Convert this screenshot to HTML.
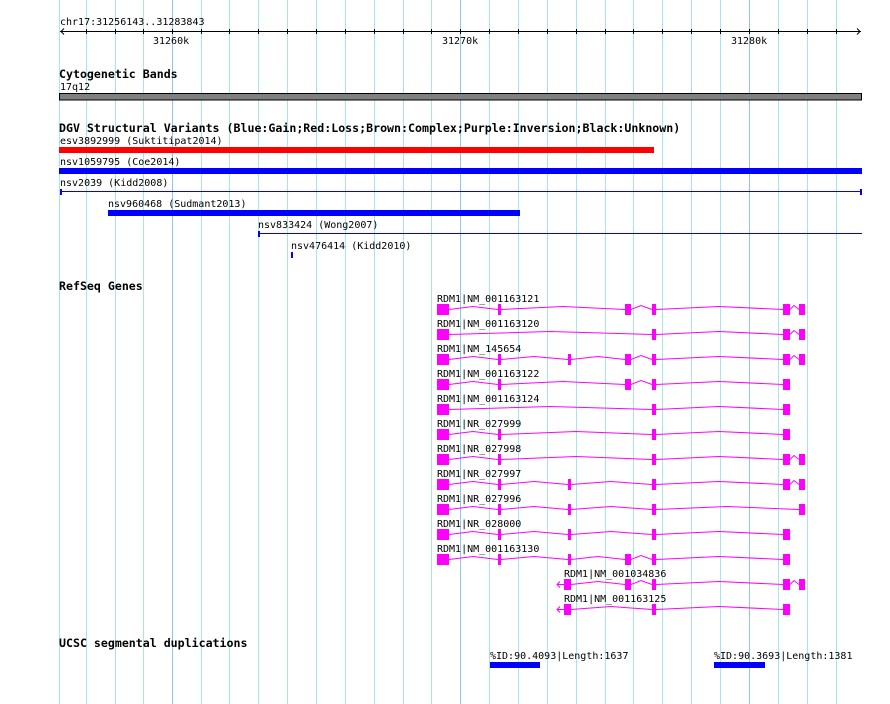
<!DOCTYPE html>
<html><head><meta charset="utf-8"><style>
html,body{margin:0;padding:0;background:#fff;width:890px;height:704px;overflow:hidden}
svg{display:block}
text{font-family:"DejaVu Sans Mono","Liberation Mono",monospace;font-size:10px;fill:#000}
.b{font-weight:bold;font-size:11.6px}
.g{stroke:#a8e6ee;stroke-width:1}
.m{stroke:#8ec6e6;stroke-width:1}
.ex{fill:#ff00ff}
.in{fill:none;stroke:#ff00ff;stroke-width:1}
</style></head><body>
<svg width="890" height="704" xmlns="http://www.w3.org/2000/svg">
<g>
<line class="g" x1="59.5" y1="0" x2="59.5" y2="704"/>
<line class="g" x1="86.5" y1="0" x2="86.5" y2="704"/>
<line class="g" x1="115.5" y1="0" x2="115.5" y2="704"/>
<line class="g" x1="143.5" y1="0" x2="143.5" y2="704"/>
<line class="m" x1="172.5" y1="0" x2="172.5" y2="704"/>
<line class="g" x1="201.5" y1="0" x2="201.5" y2="704"/>
<line class="g" x1="229.5" y1="0" x2="229.5" y2="704"/>
<line class="g" x1="258.5" y1="0" x2="258.5" y2="704"/>
<line class="g" x1="287.5" y1="0" x2="287.5" y2="704"/>
<line class="g" x1="316.5" y1="0" x2="316.5" y2="704"/>
<line class="g" x1="345.5" y1="0" x2="345.5" y2="704"/>
<line class="g" x1="374.5" y1="0" x2="374.5" y2="704"/>
<line class="g" x1="403.5" y1="0" x2="403.5" y2="704"/>
<line class="g" x1="431.5" y1="0" x2="431.5" y2="704"/>
<line class="m" x1="460.5" y1="0" x2="460.5" y2="704"/>
<line class="g" x1="489.5" y1="0" x2="489.5" y2="704"/>
<line class="g" x1="518.5" y1="0" x2="518.5" y2="704"/>
<line class="g" x1="547.5" y1="0" x2="547.5" y2="704"/>
<line class="g" x1="576.5" y1="0" x2="576.5" y2="704"/>
<line class="g" x1="605.5" y1="0" x2="605.5" y2="704"/>
<line class="g" x1="633.5" y1="0" x2="633.5" y2="704"/>
<line class="g" x1="662.5" y1="0" x2="662.5" y2="704"/>
<line class="g" x1="691.5" y1="0" x2="691.5" y2="704"/>
<line class="g" x1="720.5" y1="0" x2="720.5" y2="704"/>
<line class="m" x1="749.5" y1="0" x2="749.5" y2="704"/>
<line class="g" x1="778.5" y1="0" x2="778.5" y2="704"/>
<line class="g" x1="807.5" y1="0" x2="807.5" y2="704"/>
<line class="g" x1="836.5" y1="0" x2="836.5" y2="704"/>
</g>

<text x="60" y="25">chr17:31256143..31283843</text>
<line x1="60" y1="31.5" x2="861" y2="31.5" stroke="#000"/>
<polyline points="64,28.5 61,31.5 64,34.5" fill="none" stroke="#000"/>
<polyline points="857,28.5 860,31.5 857,34.5" fill="none" stroke="#000"/>
<g stroke="#000">
<line x1="86.5" y1="29" x2="86.5" y2="34"/><line x1="115.5" y1="29" x2="115.5" y2="34"/><line x1="143.5" y1="29" x2="143.5" y2="34"/><line x1="172.5" y1="29" x2="172.5" y2="34"/><line x1="201.5" y1="29" x2="201.5" y2="34"/><line x1="229.5" y1="29" x2="229.5" y2="34"/><line x1="258.5" y1="29" x2="258.5" y2="34"/><line x1="287.5" y1="29" x2="287.5" y2="34"/><line x1="316.5" y1="29" x2="316.5" y2="34"/><line x1="345.5" y1="29" x2="345.5" y2="34"/><line x1="374.5" y1="29" x2="374.5" y2="34"/><line x1="403.5" y1="29" x2="403.5" y2="34"/><line x1="431.5" y1="29" x2="431.5" y2="34"/><line x1="460.5" y1="29" x2="460.5" y2="34"/><line x1="489.5" y1="29" x2="489.5" y2="34"/><line x1="518.5" y1="29" x2="518.5" y2="34"/><line x1="547.5" y1="29" x2="547.5" y2="34"/><line x1="576.5" y1="29" x2="576.5" y2="34"/><line x1="605.5" y1="29" x2="605.5" y2="34"/><line x1="633.5" y1="29" x2="633.5" y2="34"/><line x1="662.5" y1="29" x2="662.5" y2="34"/><line x1="691.5" y1="29" x2="691.5" y2="34"/><line x1="720.5" y1="29" x2="720.5" y2="34"/><line x1="749.5" y1="29" x2="749.5" y2="34"/><line x1="778.5" y1="29" x2="778.5" y2="34"/><line x1="807.5" y1="29" x2="807.5" y2="34"/><line x1="836.5" y1="29" x2="836.5" y2="34"/>
</g>
<text x="153" y="44">31260k</text>
<text x="442" y="44">31270k</text>
<text x="731" y="44">31280k</text>

<text class="b" x="59" y="78">Cytogenetic Bands</text>
<text x="60" y="90">17q12</text>
<rect x="59.5" y="93.5" width="802" height="6.5" fill="#808080" stroke="#000"/>

<text class="b" x="59" y="132">DGV Structural Variants (Blue:Gain;Red:Loss;Brown:Complex;Purple:Inversion;Black:Unknown)</text>
<text x="60" y="144">esv3892999 (Suktitipat2014)</text>
<rect x="59" y="147" width="595" height="6" fill="#ff0000"/>
<text x="60" y="165">nsv1059795 (Coe2014)</text>
<rect x="59" y="168" width="803" height="6" fill="#0000ff"/>
<text x="60" y="186">nsv2039 (Kidd2008)</text>
<line x1="60" y1="191.5" x2="862" y2="191.5" stroke="#0000ff"/>
<rect x="60" y="189" width="2" height="6" fill="#0000ff"/>
<rect x="860" y="189" width="2" height="6" fill="#0000ff"/>
<text x="108" y="207">nsv960468 (Sudmant2013)</text>
<rect x="108" y="210" width="412" height="6" fill="#0000ff"/>
<text x="258" y="228">nsv833424 (Wong2007)</text>
<line x1="258" y1="233.5" x2="862" y2="233.5" stroke="#0000ff"/>
<rect x="258" y="231" width="2" height="6" fill="#0000ff"/>
<text x="291" y="249">nsv476414 (Kidd2010)</text>
<rect x="291" y="252" width="2" height="6" fill="#0000ff"/>

<text class="b" x="59" y="290">RefSeq Genes</text>

<text x="437" y="302">RDM1|NM_001163121</text>
<g transform="translate(0,309)">
<polyline class="in" points="449,0.5 473,-2.5 498,0.5"/><polyline class="in" points="501,0.5 563,-2.5 625,0.5"/><polyline class="in" points="631,0.5 641,-3.5 652,0.5"/><polyline class="in" points="656,0.5 719,-2.5 783,0.5"/><polyline class="in" points="790,0.5 794,-3.5 799,0.5"/>
<rect class="ex" x="437" y="-5" width="12" height="11"/><rect class="ex" x="498" y="-5" width="3" height="11"/><rect class="ex" x="625" y="-5" width="6" height="11"/><rect class="ex" x="652" y="-5" width="4" height="11"/><rect class="ex" x="783" y="-5" width="7" height="11"/><rect class="ex" x="799" y="-5" width="6" height="11"/>
</g>

<text x="437" y="327">RDM1|NM_001163120</text>
<g transform="translate(0,334)">
<polyline class="in" points="449,0.5 550,-2.5 652,0.5"/><polyline class="in" points="656,0.5 719,-2.5 783,0.5"/><polyline class="in" points="790,0.5 794,-3.5 799,0.5"/>
<rect class="ex" x="437" y="-5" width="12" height="11"/><rect class="ex" x="652" y="-5" width="4" height="11"/><rect class="ex" x="783" y="-5" width="7" height="11"/><rect class="ex" x="799" y="-5" width="6" height="11"/>
</g>

<text x="437" y="352">RDM1|NM_145654</text>
<g transform="translate(0,359)">
<polyline class="in" points="449,0.5 473,-2.5 498,0.5"/><polyline class="in" points="501,0.5 534,-2.5 568,0.5"/><polyline class="in" points="571,0.5 598,-2.5 625,0.5"/><polyline class="in" points="631,0.5 641,-3.5 652,0.5"/><polyline class="in" points="656,0.5 719,-2.5 783,0.5"/><polyline class="in" points="790,0.5 794,-3.5 799,0.5"/>
<rect class="ex" x="437" y="-5" width="12" height="11"/><rect class="ex" x="498" y="-5" width="3" height="11"/><rect class="ex" x="568" y="-5" width="3" height="11"/><rect class="ex" x="625" y="-5" width="6" height="11"/><rect class="ex" x="652" y="-5" width="4" height="11"/><rect class="ex" x="783" y="-5" width="7" height="11"/><rect class="ex" x="799" y="-5" width="6" height="11"/>
</g>

<text x="437" y="377">RDM1|NM_001163122</text>
<g transform="translate(0,384)">
<polyline class="in" points="449,0.5 473,-2.5 498,0.5"/><polyline class="in" points="501,0.5 563,-2.5 625,0.5"/><polyline class="in" points="631,0.5 641,-3.5 652,0.5"/><polyline class="in" points="656,0.5 719,-2.5 783,0.5"/>
<rect class="ex" x="437" y="-5" width="12" height="11"/><rect class="ex" x="498" y="-5" width="3" height="11"/><rect class="ex" x="625" y="-5" width="6" height="11"/><rect class="ex" x="652" y="-5" width="4" height="11"/><rect class="ex" x="783" y="-5" width="7" height="11"/>
</g>

<text x="437" y="402">RDM1|NM_001163124</text>
<g transform="translate(0,409)">
<polyline class="in" points="449,0.5 550,-2.5 652,0.5"/><polyline class="in" points="656,0.5 719,-2.5 783,0.5"/>
<rect class="ex" x="437" y="-5" width="12" height="11"/><rect class="ex" x="652" y="-5" width="4" height="11"/><rect class="ex" x="783" y="-5" width="7" height="11"/>
</g>

<text x="437" y="427">RDM1|NR_027999</text>
<g transform="translate(0,434)">
<polyline class="in" points="449,0.5 473,-2.5 498,0.5"/><polyline class="in" points="501,0.5 576,-2.5 652,0.5"/><polyline class="in" points="656,0.5 719,-2.5 783,0.5"/>
<rect class="ex" x="437" y="-5" width="12" height="11"/><rect class="ex" x="498" y="-5" width="3" height="11"/><rect class="ex" x="652" y="-5" width="4" height="11"/><rect class="ex" x="783" y="-5" width="7" height="11"/>
</g>

<text x="437" y="452">RDM1|NR_027998</text>
<g transform="translate(0,459)">
<polyline class="in" points="449,0.5 473,-2.5 498,0.5"/><polyline class="in" points="501,0.5 576,-2.5 652,0.5"/><polyline class="in" points="656,0.5 719,-2.5 783,0.5"/><polyline class="in" points="790,0.5 794,-3.5 799,0.5"/>
<rect class="ex" x="437" y="-5" width="12" height="11"/><rect class="ex" x="498" y="-5" width="3" height="11"/><rect class="ex" x="652" y="-5" width="4" height="11"/><rect class="ex" x="783" y="-5" width="7" height="11"/><rect class="ex" x="799" y="-5" width="6" height="11"/>
</g>

<text x="437" y="477">RDM1|NR_027997</text>
<g transform="translate(0,484)">
<polyline class="in" points="449,0.5 473,-2.5 498,0.5"/><polyline class="in" points="501,0.5 534,-2.5 568,0.5"/><polyline class="in" points="571,0.5 611,-2.5 652,0.5"/><polyline class="in" points="656,0.5 719,-2.5 783,0.5"/><polyline class="in" points="790,0.5 794,-3.5 799,0.5"/>
<rect class="ex" x="437" y="-5" width="12" height="11"/><rect class="ex" x="498" y="-5" width="3" height="11"/><rect class="ex" x="568" y="-5" width="3" height="11"/><rect class="ex" x="652" y="-5" width="4" height="11"/><rect class="ex" x="783" y="-5" width="7" height="11"/><rect class="ex" x="799" y="-5" width="6" height="11"/>
</g>

<text x="437" y="502">RDM1|NR_027996</text>
<g transform="translate(0,509)">
<polyline class="in" points="449,0.5 473,-2.5 498,0.5"/><polyline class="in" points="501,0.5 534,-2.5 568,0.5"/><polyline class="in" points="571,0.5 611,-2.5 652,0.5"/><polyline class="in" points="656,0.5 727,-2.5 799,0.5"/>
<rect class="ex" x="437" y="-5" width="12" height="11"/><rect class="ex" x="498" y="-5" width="3" height="11"/><rect class="ex" x="568" y="-5" width="3" height="11"/><rect class="ex" x="652" y="-5" width="4" height="11"/><rect class="ex" x="799" y="-5" width="6" height="11"/>
</g>

<text x="437" y="527">RDM1|NR_028000</text>
<g transform="translate(0,534)">
<polyline class="in" points="449,0.5 473,-2.5 498,0.5"/><polyline class="in" points="501,0.5 534,-2.5 568,0.5"/><polyline class="in" points="571,0.5 611,-2.5 652,0.5"/><polyline class="in" points="656,0.5 719,-2.5 783,0.5"/>
<rect class="ex" x="437" y="-5" width="12" height="11"/><rect class="ex" x="498" y="-5" width="3" height="11"/><rect class="ex" x="568" y="-5" width="3" height="11"/><rect class="ex" x="652" y="-5" width="4" height="11"/><rect class="ex" x="783" y="-5" width="7" height="11"/>
</g>

<text x="437" y="552">RDM1|NM_001163130</text>
<g transform="translate(0,559)">
<polyline class="in" points="449,0.5 473,-2.5 498,0.5"/><polyline class="in" points="501,0.5 534,-2.5 568,0.5"/><polyline class="in" points="571,0.5 598,-2.5 625,0.5"/><polyline class="in" points="631,0.5 641,-3.5 652,0.5"/><polyline class="in" points="656,0.5 719,-2.5 783,0.5"/>
<rect class="ex" x="437" y="-5" width="12" height="11"/><rect class="ex" x="498" y="-5" width="3" height="11"/><rect class="ex" x="568" y="-5" width="3" height="11"/><rect class="ex" x="625" y="-5" width="6" height="11"/><rect class="ex" x="652" y="-5" width="4" height="11"/><rect class="ex" x="783" y="-5" width="7" height="11"/>
</g>

<text x="564" y="577">RDM1|NM_001034836</text>
<g transform="translate(0,584)">
<line class="in" x1="557" y1="0.5" x2="564" y2="0.5"/><polyline class="in" points="560,-2.5 557,0.5 560,3.5"/>
<polyline class="in" points="571,0.5 598,-2.5 625,0.5"/><polyline class="in" points="631,0.5 641,-3.5 652,0.5"/><polyline class="in" points="656,0.5 719,-2.5 783,0.5"/><polyline class="in" points="790,0.5 794,-3.5 799,0.5"/>
<rect class="ex" x="564" y="-5" width="7" height="11"/><rect class="ex" x="625" y="-5" width="6" height="11"/><rect class="ex" x="652" y="-5" width="4" height="11"/><rect class="ex" x="783" y="-5" width="7" height="11"/><rect class="ex" x="799" y="-5" width="6" height="11"/>
</g>

<text x="564" y="602">RDM1|NM_001163125</text>
<g transform="translate(0,609)">
<line class="in" x1="557" y1="0.5" x2="564" y2="0.5"/><polyline class="in" points="560,-2.5 557,0.5 560,3.5"/>
<polyline class="in" points="571,0.5 611,-2.5 652,0.5"/><polyline class="in" points="656,0.5 719,-2.5 783,0.5"/>
<rect class="ex" x="564" y="-5" width="7" height="11"/><rect class="ex" x="652" y="-5" width="4" height="11"/><rect class="ex" x="783" y="-5" width="7" height="11"/>
</g>

<text class="b" x="59" y="647">UCSC segmental duplications</text>
<text x="490" y="659">%ID:90.4093|Length:1637</text>
<rect x="490" y="662" width="50" height="6" fill="#0000ff"/>
<text x="714" y="659">%ID:90.3693|Length:1381</text>
<rect x="714" y="662" width="51" height="6" fill="#0000ff"/>
</svg>
</body></html>
